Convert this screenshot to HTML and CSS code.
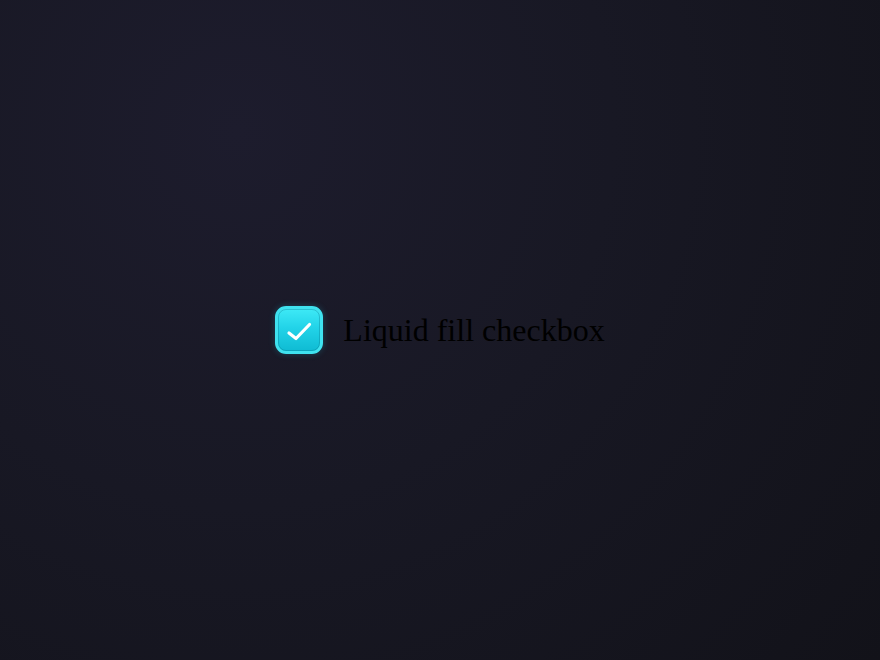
FILE: index.html
```html
<!DOCTYPE html>
<html>
<head>
<meta charset="utf-8">
<link rel="stylesheet" href="styles.css">
</head>
<body>
<div class="stage">
  <label class="check">
    <span class="box">
      <svg class="tick" viewBox="0 0 48 48" width="48" height="48">
        <path d="M14 27 L21 32.5 L34.5 18.5" fill="none" stroke="#fff" stroke-width="3.2" stroke-linecap="round" stroke-linejoin="round"/>
      </svg>
    </span>
    <span class="label">Liquid fill checkbox</span>
  </label>
</div>
</body>
</html>
```
FILE: styles.css
```css
html, body {
  margin: 0;
  padding: 0;
  height: 100%;
}
body {
  background: radial-gradient(circle at 27% 20%, #1d1c2d 0%, #181824 45%, #121219 100%);
  font-family: "Liberation Serif", "Times New Roman", serif;
}
.stage {
  height: 100%;
  display: flex;
  align-items: center;
  justify-content: center;
}
.check {
  display: flex;
  align-items: center;
  gap: 20px;
}
.box {
  position: relative;
  width: 48px;
  height: 48px;
  box-sizing: border-box;
  border-radius: 11px;
  background: linear-gradient(180deg, #3ee9f6 0%, #22d3e8 45%, #0fbbd3 100%);
  border: 3px solid #3fe2ef;
  box-shadow: 0 0 6px rgba(34, 211, 238, 0.25);
}
.box::before {
  content: "";
  position: absolute;
  inset: 0;
  border-radius: 8px;
  border: 1px solid rgba(10, 120, 140, 0.35);
}
.tick {
  position: absolute;
  left: -3px;
  top: -3px;
}
.label {
  font-size: 32px;
  color: #000;
  line-height: 1.15;
}
```
